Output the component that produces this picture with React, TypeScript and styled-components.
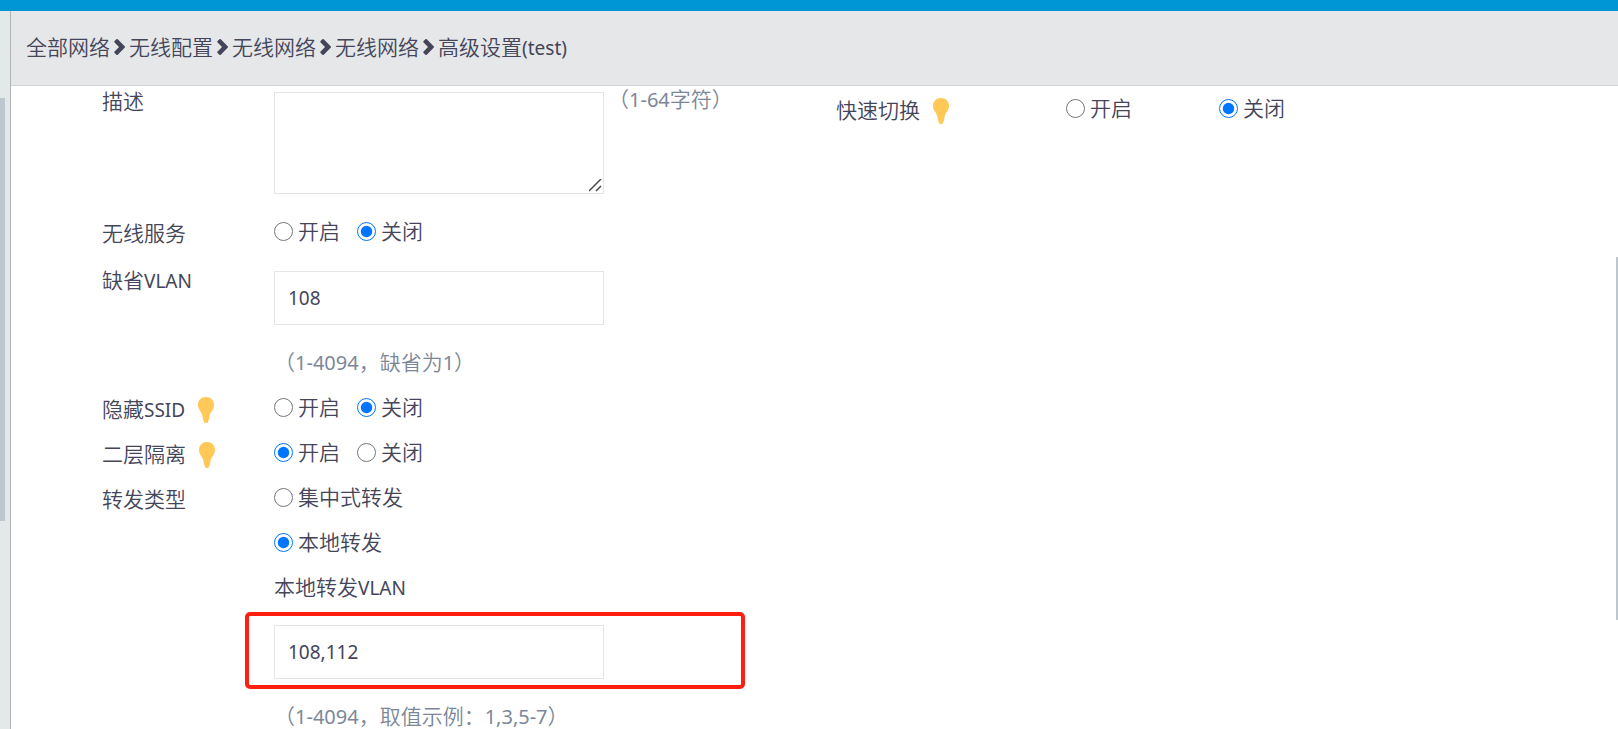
import React from "react";
import styled, { createGlobalStyle } from "styled-components";

const sans = '"Noto Sans", "Noto Sans CJK SC", sans-serif';
const cjk = '"Noto Sans CJK SC", "Noto Sans", sans-serif';

const GlobalStyle = createGlobalStyle`
  *, *::before, *::after { box-sizing: border-box; }
  body {
    margin: 0;
    background: #fff;
    color: #444559;
    font-family: ${cjk};
    font-size: 21px;
    font-weight: 350;
  }
`;

const Shell = styled.div`
  display: flex;
  flex-direction: column;
  height: 100vh;
  overflow: hidden;
`;

const TopBar = styled.div`
  flex: none;
  height: 11px;
  background: #0096d6;
`;

const Body = styled.div`
  flex: 1;
  display: flex;
  min-height: 0;
`;

const SideRail = styled.aside`
  flex: none;
  width: 11px;
  padding-top: 87px;
  background: #e3e8e8;
  border-right: 1px solid #b1b3b5;
`;

const SideThumb = styled.div`
  width: 5px;
  height: 67%;
  background: #bec6d0;
`;

const Content = styled.div`
  flex: 1;
  display: flex;
  flex-direction: column;
  min-width: 0;
`;

const Header = styled.nav`
  flex: none;
  display: flex;
  align-items: center;
  height: 75px;
  padding: 0 15px 4px;
  background: #e5e7e9;
  border-bottom: 1px solid #d0d2d4;
`;

const Crumb = styled.a`
  color: inherit;
  text-decoration: none;
  white-space: nowrap;
`;

const Chevron = styled.svg`
  flex: none;
  width: 11px;
  height: 18px;
  margin: 2px 4px 0;
  fill: #444559;
`;

const ScrollArea = styled.div`
  flex: 1;
  display: flex;
  min-height: 0;
`;

const Form = styled.form`
  flex: 1;
  display: grid;
  grid-template-columns: 1fr 1fr;
  align-items: start;
  padding: 0 46px 0 91px;
  overflow-y: auto;
  scrollbar-width: none;
`;

const PageRail = styled.div`
  flex: none;
  width: 2px;
  display: grid;
  grid-template-rows: 171fr 363fr 109fr;
`;

const PageThumb = styled.div`
  grid-row: 2;
  background: #bec6d0;
`;

const Column = styled.div`
  min-width: 0;
`;

const Row = styled.div<{ $label?: number }>`
  display: grid;
  grid-template-columns: ${(p) => p.$label ?? 172}px 1fr;
  align-items: start;
`;

const Label = styled.div<{ $kind?: "area" | "input" }>`
  display: flex;
  align-items: center;
  gap: 13px;
  height: ${(p) => (p.$kind === "area" ? 27 : 45)}px;
  padding-top: ${(p) => (p.$kind === "input" ? 4 : 0)}px;
  white-space: nowrap;
`;

const Latin = styled.span`
  font-family: ${sans};
  font-size: 19px;
  font-weight: 400;
  line-height: 1;
`;

const Options = styled.div<{ $gap?: number }>`
  display: flex;
  gap: ${(p) => p.$gap ?? 17}px;
`;

const Option = styled.label`
  display: flex;
  align-items: center;
  gap: 5px;
  height: 45px;
  white-space: nowrap;
`;

const OptionText = styled.span`
  padding-bottom: 4px;
`;

const Radio = styled.input`
  width: 19px;
  height: 19px;
  margin: 0;
  accent-color: #0075ff;
`;

const fieldBox = `
  display: block;
  width: 330px;
  border: 1px solid #e3e6e6;
  border-radius: 0;
  background: #fff;
  color: #444559;
  font: 400 19px ${sans};
  outline: none;
`;

const TextInput = styled.input`
  ${fieldBox}
  height: 54px;
  padding: 0 13px;
`;

const TextArea = styled.textarea`
  ${fieldBox}
  height: 102px;
  padding: 8px 13px;

  &::-webkit-resizer {
    background: transparent;
  }
`;

const AreaField = styled.div`
  display: flex;
  align-items: flex-start;
  gap: 4px;
`;

const AreaBox = styled.div`
  position: relative;
  margin: 6px 0 15px;
`;

const Grip = styled.svg`
  position: absolute;
  right: 2px;
  bottom: 2px;
  width: 13px;
  height: 13px;
  fill: none;
  stroke: #4a4a4a;
  stroke-width: 1.5;
  pointer-events: none;
`;

const FieldSlot = styled.div<{ $top: number }>`
  position: relative;
  padding: ${(p) => p.$top}px 0 15px;
`;

const Highlight = styled.div`
  position: absolute;
  top: 2px;
  left: -29px;
  width: 500px;
  height: 77px;
  border: 4px solid #ff1e10;
  border-radius: 5px;
  pointer-events: none;
`;

const Hint = styled.div<{ $compact?: boolean }>`
  height: ${(p) => (p.$compact ? 24 : 45)}px;
  line-height: ${(p) => (p.$compact ? 24 : 42)}px;
  color: #7b8798;
  white-space: nowrap;

  ${Latin} {
    font-size: 20px;
  }
`;

const BulbSvg = styled.svg`
  flex: none;
  width: 16px;
  height: 26px;
  margin-top: 4px;
  fill: #ffc857;
`;

const Bulb = () => (
  <BulbSvg viewBox="0 0 16 26" aria-hidden="true">
    <path d="M8 0C3.400 0 0 3.500 0 8c0 2.600 1.200 4.600 2.500 6.600 1.200 1.900 2 3.400 2.300 5.900h6.400c.3-2.500 1.100-4 2.300-5.900C14.800 12.600 16 10.600 16 8c0-4.500-3.400-8-8-8z" />
    <path d="M4.800 20h6.400v2.600l-1 .9v1L9.200 26H6.800l-1-1.500v-1l-1-.9z" />
  </BulbSvg>
);

const Separator = () => (
  <Chevron viewBox="0 0 11 18" aria-hidden="true">
    <path d="M10.600 8.200 3.800 1.300a1 1 0 0 0-1.400 0L.6 3.100a1 1 0 0 0 0 1.400L5 9 .6 13.500a1 1 0 0 0 0 1.400l1.800 1.800a1 1 0 0 0 1.400 0l6.800-6.900a1.100 1.100 0 0 0 0-1.600z" />
  </Chevron>
);

type Choice = { text: string; checked?: boolean };

const RadioSet = ({ name, label, choices, gap }: { name: string; label: string; choices: Choice[]; gap?: number }) => (
  <Options role="radiogroup" aria-label={label} $gap={gap}>
    {choices.map((c) => (
      <Option key={c.text}>
        <Radio type="radio" name={name} defaultChecked={c.checked} />
        <OptionText>{c.text}</OptionText>
      </Option>
    ))}
  </Options>
);

const trail = ["全部网络", "无线配置", "无线网络", "无线网络"];

export default function App() {
  return (
    <>
      <GlobalStyle />
      <Shell>
        <TopBar />
        <Body>
          <SideRail>
            <SideThumb />
          </SideRail>
          <Content>
            <Header>
              {trail.map((t, i) => (
                <React.Fragment key={i}>
                  <Crumb href="#">{t}</Crumb>
                  <Separator />
                </React.Fragment>
              ))}
              <Crumb href="#">
                高级设置<Latin>(test)</Latin>
              </Crumb>
            </Header>
            <ScrollArea>
              <Form>
                <Column>
                  <Row>
                    <Label as="label" htmlFor="desc" $kind="area">
                      描述
                    </Label>
                    <AreaField>
                      <AreaBox>
                        <TextArea id="desc" />
                        <Grip viewBox="0 0 13 13" aria-hidden="true">
                          <path d="M0 12 12 0M7 12l5-5" />
                        </Grip>
                      </AreaBox>
                      <Hint $compact>
                        （<Latin>1-64</Latin>字符）
                      </Hint>
                    </AreaField>
                  </Row>
                  <Row>
                    <Label>无线服务</Label>
                    <RadioSet name="service" label="无线服务" choices={[{ text: "开启" }, { text: "关闭", checked: true }]} />
                  </Row>
                  <Row>
                    <Label as="label" htmlFor="vlan" $kind="input">
                      <span>
                        缺省<Latin>VLAN</Latin>
                      </span>
                    </Label>
                    <div>
                      <FieldSlot $top={17}>
                        <TextInput id="vlan" type="text" defaultValue="108" />
                      </FieldSlot>
                      <Hint>
                        （<Latin>1-4094</Latin>，缺省为<Latin>1</Latin>）
                      </Hint>
                    </div>
                  </Row>
                  <Row>
                    <Label>
                      <span>
                        隐藏<Latin>SSID</Latin>
                      </span>
                      <Bulb />
                    </Label>
                    <RadioSet name="ssid" label="隐藏SSID" choices={[{ text: "开启" }, { text: "关闭", checked: true }]} />
                  </Row>
                  <Row>
                    <Label>
                      二层隔离
                      <Bulb />
                    </Label>
                    <RadioSet name="isolation" label="二层隔离" choices={[{ text: "开启", checked: true }, { text: "关闭" }]} />
                  </Row>
                  <Row>
                    <Label>转发类型</Label>
                    <div>
                      <Option>
                        <Radio type="radio" name="forward" />
                        <OptionText>集中式转发</OptionText>
                      </Option>
                      <Option>
                        <Radio type="radio" name="forward" defaultChecked />
                        <OptionText>本地转发</OptionText>
                      </Option>
                      <Option htmlFor="local-vlan">
                        <OptionText>
                          本地转发<Latin>VLAN</Latin>
                        </OptionText>
                      </Option>
                      <FieldSlot $top={15}>
                        <TextInput id="local-vlan" type="text" defaultValue="108,112" />
                        <Highlight />
                      </FieldSlot>
                      <Hint>
                        （<Latin>1-4094</Latin>，取值示例：<Latin>1,3,5-7</Latin>）
                      </Hint>
                    </div>
                  </Row>
                </Column>
                <Column>
                  <Row $label={230}>
                    <Label>
                      快速切换
                      <Bulb />
                    </Label>
                    <RadioSet
                      name="roaming"
                      label="快速切换"
                      gap={87}
                      choices={[{ text: "开启" }, { text: "关闭", checked: true }]}
                    />
                  </Row>
                </Column>
              </Form>
              <PageRail>
                <PageThumb />
              </PageRail>
            </ScrollArea>
          </Content>
        </Body>
      </Shell>
    </>
  );
}
